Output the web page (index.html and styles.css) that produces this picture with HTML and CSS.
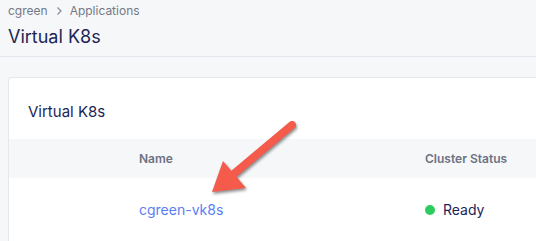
FILE: index.html
```html
<!DOCTYPE html>
<html>

<head>
    <meta charset="utf-8" />
    <title>Virtual K8s</title>
    <link rel="stylesheet" href="styles.css">
</head>

<body>
    <div class="page-header">
        <div class="crumbs">
            <span>cgreen</span>
            <svg class="chev" viewBox="0 0 8 10" width="8" height="10">
                <path d="M2.5 1.5 L6 5 L2.5 8.5" fill="none" stroke="currentColor" stroke-width="1.3" />
            </svg>
            <span>Applications</span>
        </div>
        <h1 class="title">Virtual K8s</h1>
    </div>
    <div class="content">
        <div class="card">
            <div class="card-title">Virtual K8s</div>
            <div class="table">
                <div class="row head">
                    <div class="cell name">Name</div>
                    <div class="cell status">Cluster Status</div>
                </div>
                <div class="row">
                    <div class="cell name"><a class="link">cgreen-vk8s</a></div>
                    <div class="cell status"><span class="dot"></span>Ready</div>
                </div>
            </div>
        </div>
    </div>
    <!-- annotation arrow drawn over the screenshot -->
    <svg class="arrow" width="536" height="241" viewBox="0 0 536 241">
        <line x1="292" y1="125" x2="230" y2="177" stroke="#f45b4b" stroke-width="8" stroke-linecap="round" />
        <polygon points="212,192 223,161 246,188" fill="#f45b4b" />
    </svg>
</body>

</html>
```

FILE: styles.css
```css
* {
    margin: 0;
    padding: 0;
    box-sizing: border-box;
}

body {
    background-color: #f6f7f9;
    font-family: Inter, "Noto Sans", sans-serif;
    color: #1c2557;
    overflow: hidden;
    height: 241px;
}

.page-header {
    padding: 3px 8px 0;
    height: 57px;
    border-bottom: 1px solid #e3e6ee;
}

.crumbs {
    display: flex;
    align-items: center;
    gap: 7px;
    font-size: 12px;
    line-height: 16px;
    color: #737888;
}

.crumbs .chev {
    color: #8a8f9d;
}

.title {
    margin-top: 6px;
    font-size: 18px;
    font-weight: 400;
    line-height: 24px;
}

.content {
    padding: 20px 0 0 8px;
}

.card {
    background-color: #ffffff;
    border: 1px solid #e4e7ee;
    border-right: none;
    border-bottom: none;
    border-radius: 4px 0 0 0;
    height: 170px;
}

.card-title {
    height: 61px;
    padding: 24px 0 0 19px;
    font-size: 15px;
    line-height: 20px;
}

.row {
    display: grid;
    grid-template-columns: 416px 1fr;
    align-items: center;
    height: 63px;
}

.row.head {
    height: 39px;
    background-color: #f6f7f9;
    font-size: 12px;
    font-weight: 600;
    color: #6b7284;
}

.cell.name {
    padding-left: 130px;
}

.cell.status {
    display: flex;
    align-items: center;
    gap: 8px;
}

.row:not(.head) {
    font-size: 14px;
}

.link {
    color: #5a7ef6;
}

.dot {
    width: 10px;
    height: 10px;
    border-radius: 50%;
    background-color: #2ecc5e;
}

.arrow {
    position: absolute;
    left: 0;
    top: 0;
    filter: drop-shadow(1px 2px 1.5px rgba(0, 0, 0, 0.45));
}
```
